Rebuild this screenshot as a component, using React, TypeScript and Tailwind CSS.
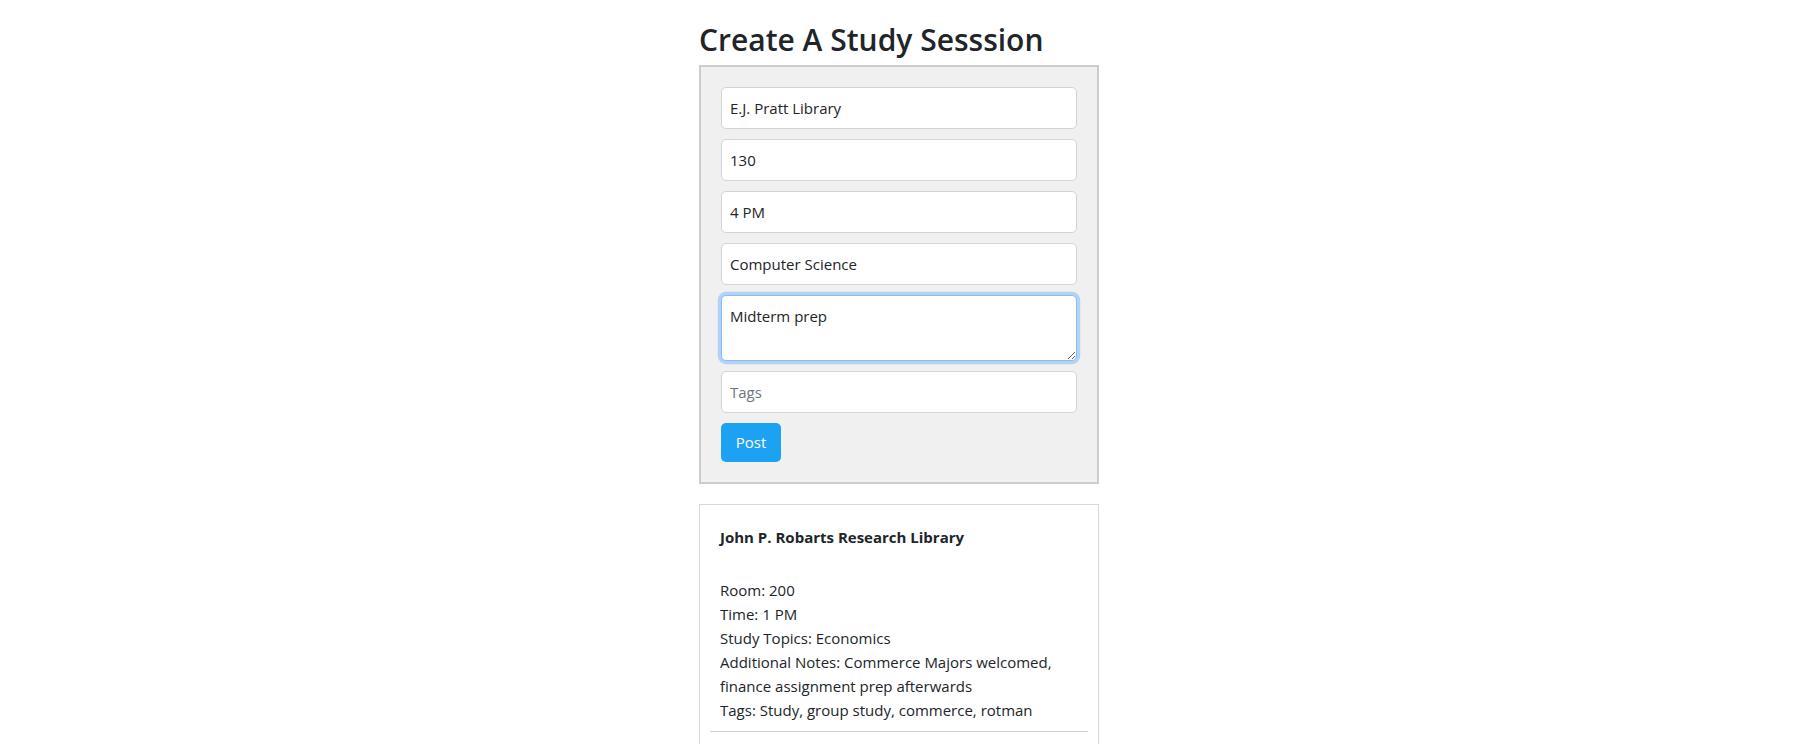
import React from 'react';

const fields = ['E.J. Pratt Library', '130', '4 PM', 'Computer Science'];

const sessions = [
  {
    building: 'John P. Robarts Research Library',
    room: '200',
    time: '1 PM',
    topics: 'Economics',
    notes: 'Commerce Majors welcomed, finance assignment prep afterwards',
    tags: 'Study, group study, commerce, rotman',
  },
];

export default function App() {
  return (
    <main className="min-h-screen bg-white font-['Open_Sans',sans-serif] text-[15px] text-[#212529]">
      <div className="flex justify-center pr-[7px] pt-[21px]">
        <div className="w-[400px]">
          <h2 className="mb-[6px] whitespace-nowrap text-[30px] font-semibold leading-[38px]">
            Create A Study Sesssion
          </h2>

          {/* Form */}
          <form
            className="flex flex-col gap-[10px] border-2 border-[#cccccc] bg-[#f0f0f0] p-5"
            onSubmit={(e) => e.preventDefault()}
          >
            {fields.map((value) => (
              <input
                key={value}
                type="text"
                defaultValue={value}
                className="h-[42px] w-full rounded-[5px] border border-[#ced4da] bg-white px-2 leading-6 text-[#212529] outline-none"
              />
            ))}
            <textarea
              rows={2}
              defaultValue="Midterm prep"
              className="h-[66px] w-full rounded-[5px] border border-[#80bdff] bg-white px-2 py-2 leading-6 text-[#212529] shadow-[0_0_0_3.2px_rgba(0,123,255,0.25)] outline-none"
            />
            <input
              type="text"
              placeholder="Tags"
              className="h-[42px] w-full rounded-[5px] border border-[#ced4da] bg-white px-2 leading-6 outline-none placeholder:text-[#6c757d]"
            />
            <button
              type="submit"
              className="flex h-[39px] w-[60px] items-center justify-center rounded-[5px] bg-[#1da1f2] text-white"
            >
              Post
            </button>
          </form>

          {/* Posted sessions */}
          {sessions.map((s) => (
            <div key={s.building} className="mt-[20px] border border-[#d8d8d8] px-[10px] pt-5 pb-10">
              <div className="px-[10px] leading-6">
                <div className="mb-[29px] font-bold">{s.building}</div>
                <div>Room: {s.room}</div>
                <div>Time: {s.time}</div>
                <div>Study Topics: {s.topics}</div>
                <div>Additional Notes: {s.notes}</div>
                <div>Tags: {s.tags}</div>
              </div>
              <div className="mt-[9px] border-t border-[#d0d0d0]" />
            </div>
          ))}
        </div>
      </div>
    </main>
  );
}
